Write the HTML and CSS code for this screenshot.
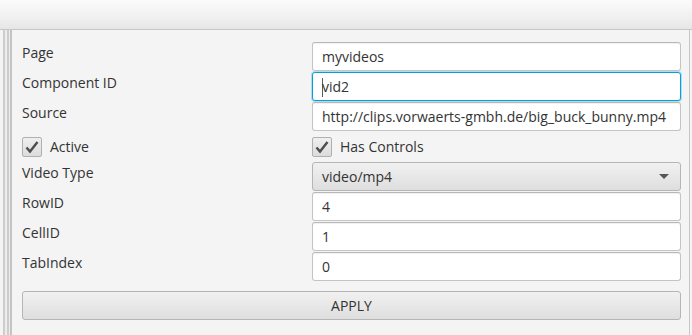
FILE: index.html
```html
<!DOCTYPE html>
<html lang="en">

<head>
    <meta charset="UTF-8">
    <meta name="viewport" content="width=device-width, initial-scale=1.0">
    <title>Video Properties</title>
    <link rel="stylesheet" href="styles.css">
</head>

<body>
    <div class="toolbar"></div>
    <div class="workspace">
        <div class="rail"></div>
        <div class="panel">
            <div class="form">
                <div class="label">Page</div>
                <div class="field">myvideos</div>

                <div class="label">Component ID</div>
                <div class="field focused"><span class="caret"></span>vid2</div>

                <div class="label">Source</div>
                <div class="field">http://clips.vorwaerts-gmbh.de/big_buck_bunny.mp4</div>

                <label class="check">
                    <span class="box"><svg viewBox="0 0 20 20" width="20" height="20"><path d="M4.5 10.5 L8 14.5 L15.5 5" /></svg></span>
                    Active
                </label>
                <label class="check">
                    <span class="box"><svg viewBox="0 0 20 20" width="20" height="20"><path d="M4.5 10.5 L8 14.5 L15.5 5" /></svg></span>
                    Has Controls
                </label>

                <div class="label">Video Type</div>
                <div class="combo">
                    <span>video/mp4</span>
                    <span class="arrow"></span>
                </div>

                <div class="label">RowID</div>
                <div class="field">4</div>

                <div class="label">CellID</div>
                <div class="field">1</div>

                <div class="label">TabIndex</div>
                <div class="field">0</div>
            </div>
            <button class="apply">APPLY</button>
        </div>
    </div>
</body>

</html>
```

FILE: styles.css
```css
html,
body {
    height: 100%;
}

body {
    margin: 0;
    display: flex;
    flex-direction: column;
    background: #f4f4f4;
    color: #333333;
    font-family: 'Open Sans', 'Noto Sans', sans-serif;
    font-size: 14px;
    overflow: hidden;
}

.toolbar {
    height: 29px;
    flex: none;
    background: linear-gradient(to bottom, #fbfbfb 0%, #f0f0f0 60%, #e6e6e6 100%);
    border-bottom: 1px solid #c6c6c6;
}

.workspace {
    flex: 1;
    display: flex;
}

.rail {
    width: 12px;
    flex: none;
    background: linear-gradient(to right,
            #f4f4f4 0, #f4f4f4 3px,
            #cdcdcd 3px, #cdcdcd 5px,
            #ececec 5px, #ececec 7px,
            #cdcdcd 7px, #cdcdcd 9px,
            #ececec 9px, #ececec 10px,
            #c4c4c4 10px, #c4c4c4 12px);
}

.panel {
    flex: 1;
    padding: 12px 8px 0 10px;
    margin-right: 2px;
    border-right: 1px solid #c8c8c8;
}

.form {
    display: grid;
    grid-template-columns: 290px 1fr;
    grid-auto-rows: 29px;
    row-gap: 1px;
}

.label {
    padding-top: 1px;
    line-height: 20px;
}

.field {
    box-sizing: border-box;
    height: 29px;
    padding: 0 9px;
    line-height: 27px;
    background: #ffffff;
    border: 1px solid #c4c4c4;
    border-top-color: #b8b8b8;
    border-radius: 3px;
    box-shadow: inset 0 1px 1px rgba(0, 0, 0, 0.06);
    white-space: nowrap;
    overflow: hidden;
}

.field.focused {
    border-color: #0a9ed6;
    box-shadow: 0 0 0 1px #aedcf0;
}

.caret {
    display: inline-block;
    width: 1px;
    height: 19px;
    margin-right: -1px;
    vertical-align: -5px;
    background: #5a5a5a;
}

.check {
    display: flex;
    align-items: center;
    gap: 8px;
}

.box {
    box-sizing: border-box;
    width: 20px;
    height: 20px;
    border: 1px solid #b0b0b0;
    border-radius: 2px;
    background: linear-gradient(to bottom, #efefef, #dcdcdc);
    display: flex;
    align-items: center;
    justify-content: center;
}

.box svg {
    display: block;
    margin: -1px;
}

.box path {
    fill: none;
    stroke: #4d4d4d;
    stroke-width: 2.4;
}

.combo {
    box-sizing: border-box;
    height: 29px;
    padding: 0 11px 0 9px;
    display: flex;
    align-items: center;
    justify-content: space-between;
    border: 1px solid #b5b5b5;
    border-radius: 3px;
    background: linear-gradient(to bottom, #f1f1f1, #dedede);
}

.arrow {
    width: 0;
    height: 0;
    border-left: 5px solid transparent;
    border-right: 5px solid transparent;
    border-top: 5px solid #555555;
}

.apply {
    display: block;
    box-sizing: border-box;
    width: 100%;
    height: 29px;
    margin-top: 10px;
    padding: 0;
    border: 1px solid #b5b5b5;
    border-radius: 3px;
    background: linear-gradient(to bottom, #f1f1f1, #dedede);
    color: #333333;
    font-family: inherit;
    font-size: 14px;
}
```
